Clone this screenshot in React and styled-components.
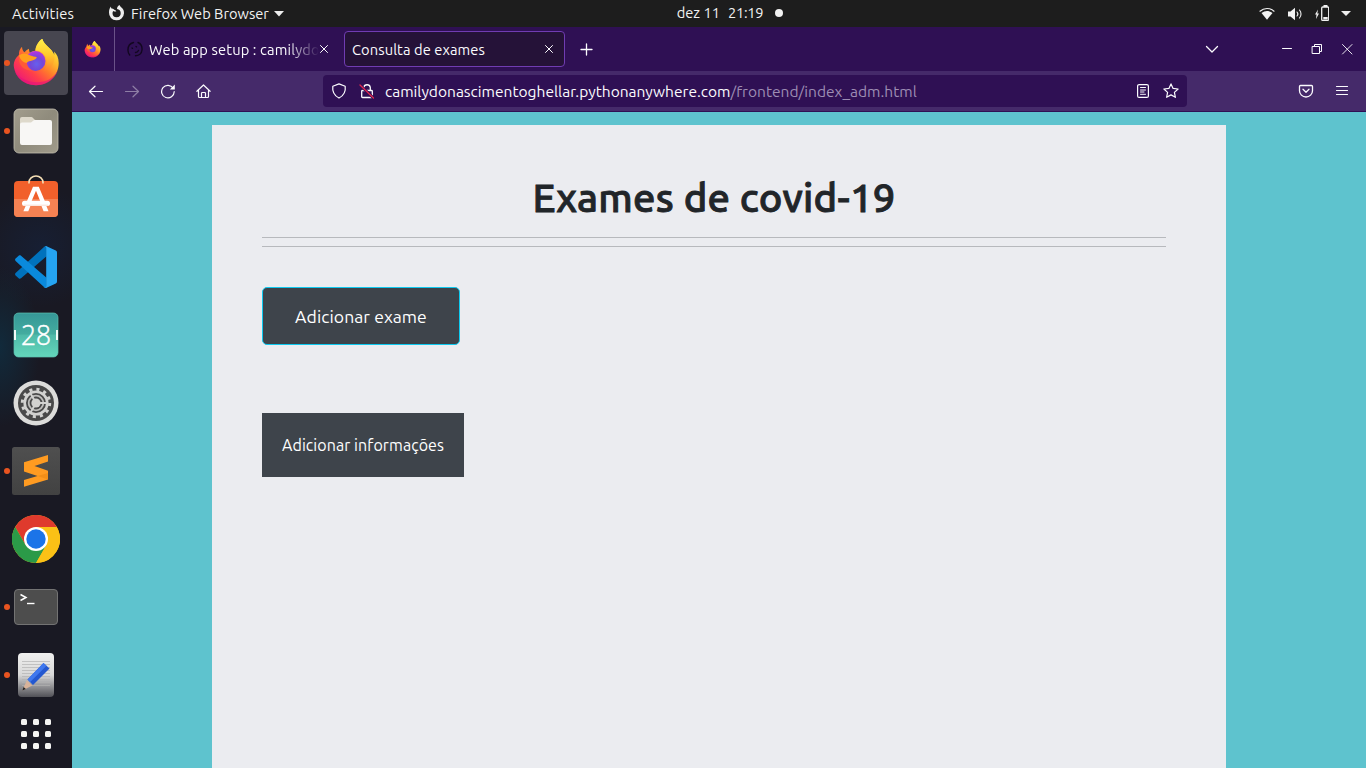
import React from "react";
import styled, { createGlobalStyle } from "styled-components";

const Global = createGlobalStyle`
  * { box-sizing: border-box; }
  body { margin: 0; overflow: hidden; background: #1d1d1d; font-family: Ubuntu, "Noto Sans", sans-serif; }
  button { font-family: inherit; }
  svg { display: block; flex: none; }
`;

const Desktop = styled.div`
  width: 1366px;
  height: 768px;
  display: grid;
  grid-template: 27px 741px / 72px 1294px;
  overflow: hidden;
`;

const Label = styled.span`
  font-size: ${(p) => p.$size || 14.667}px;
  letter-spacing: ${(p) => p.$track || 0}px;
  line-height: 20px;
  white-space: pre;
`;

/* ---------- top panel ---------- */
const Panel = styled.header`
  grid-column: 1 / 3;
  display: grid;
  grid-template-columns: 1fr auto 1fr;
  align-items: center;
  background: #1d1d1d;
  color: #f2f2f2;
`;
const PanelLeft = styled.div`
  display: flex;
  align-items: center;
  padding-left: 12px;
`;
const AppMenu = styled.div`
  display: flex;
  align-items: center;
  gap: 5px;
  margin-left: 34px;
`;
const MenuTitle = styled(Label)`
  margin-left: 1px;
`;
const Clock = styled.div`
  display: flex;
  align-items: center;
  gap: 8px;
  margin-left: 94px;
  padding-bottom: 1px;
`;
const Dot = styled.i`
  width: 8px;
  height: 8px;
  border-radius: 50%;
  margin-left: 4px;
  background: #f2f2f2;
`;
const PanelRight = styled.div`
  display: flex;
  justify-content: flex-end;
  align-items: center;
  gap: 12px;
  padding-right: 15px;
`;

/* ---------- dock ---------- */
const Dock = styled.nav`
  display: flex;
  flex-direction: column;
  align-items: center;
  gap: 4px;
  padding-top: 4px;
  background:
    radial-gradient(ellipse 40px 80px at 0 320px, #112a3b 0, transparent 100%),
    radial-gradient(ellipse 60px 60px at 40px 220px, #171f33 0, transparent 100%),
    #191923;
`;
const Slot = styled.div`
  position: relative;
  width: 64px;
  height: 64px;
  flex: none;
  display: grid;
  place-items: center;
  border-radius: 4px;
  background: ${(p) => (p.$active ? "#474650" : "transparent")};
`;
const Running = styled.i`
  position: absolute;
  left: 0;
  top: 29px;
  width: 6px;
  height: 6px;
  border-radius: 50%;
  background: #e95420;
`;
const Launcher = styled.div`
  display: grid;
  grid-template-columns: repeat(3, 6px);
  gap: 6px;
  margin-top: 8px;
`;
const LauncherDot = styled.i`
  height: 6px;
  border-radius: 1.5px;
  background: #f4f4f2;
`;

/* ---------- browser ---------- */
const Browser = styled.main`
  display: flex;
  flex-direction: column;
  background: #5ec3ce;
`;
const TabStrip = styled.div`
  height: 44px;
  flex: none;
  display: flex;
  align-items: center;
  background: #2f1054;
  color: #fbfbfe;
`;
const PinnedTab = styled.div`
  width: 43px;
  height: 44px;
  display: flex;
  align-items: center;
  padding-left: 12px;
  border-right: 1px solid #6a5288;
`;
const Tab = styled.div`
  width: ${(p) => p.$width}px;
  height: 36px;
  display: flex;
  align-items: center;
  margin-left: ${(p) => p.$gap}px;
  padding: 0 ${(p) => p.$end}px 0 7px;
  border-radius: 4px;
  border: 1px solid ${(p) => (p.$active ? "#703cb2" : "transparent")};
  background: ${(p) => (p.$active ? "#251238" : "transparent")};
`;
const TabTitle = styled.div`
  flex: 1;
  min-width: 0;
  margin-left: ${(p) => p.$indent || 0}px;
  padding-top: 1px;
  display: flex;
  ${(p) => p.$fade && "margin-right: -3px; mask-image: linear-gradient(to right, #000 calc(100% - 32px), transparent);"}
`;
const NewTab = styled.div`
  margin-left: 13px;
`;
const WindowControls = styled.div`
  display: flex;
  align-items: center;
  margin-left: auto;
  gap: 14px;
  padding-right: 11px;
`;
const TabsMenu = styled.div`
  margin-right: 45px;
`;
const Toolbar = styled.div`
  height: 41px;
  flex: none;
  display: flex;
  align-items: center;
  background: #452a6a;
  border-bottom: 1px solid #2f1054;
  color: #fbfbfe;
`;
const NavButtons = styled.div`
  width: 251px;
  display: flex;
  gap: 20px;
  padding-left: 16px;
`;
const AddressBar = styled.div`
  width: 864px;
  height: 32px;
  display: flex;
  align-items: center;
  gap: 12px;
  padding: 0 8px;
  border-radius: 4px;
  background: #2f1054;
`;
const Url = styled.div`
  flex: 1;
  margin-left: -2px;
  padding-top: 1px;
  display: flex;
`;
const UrlPath = styled(Label)`
  color: #9d8db3;
`;
const ToolbarEnd = styled.div`
  margin-left: auto;
  display: flex;
  gap: 20px;
  padding-right: 16px;
`;

/* ---------- page ---------- */
const Sheet = styled.section`
  flex: 1;
  width: 1014px;
  margin: 13px 0 0 140px;
  padding: 49px 60px 0 50px;
  background: #ebecf0;
`;
const Title = styled.h1`
  margin: 0 0 15px;
  text-align: center;
  font-size: 40px;
  font-weight: 500;
  line-height: 48px;
  letter-spacing: 0.25px;
  -webkit-text-stroke: 0.9px #212529;
  color: #212529;
  white-space: nowrap;
`;
const Rule = styled.hr`
  height: 1px;
  margin: 0 0 8px;
  border: 0;
  background: #b7b9bd;
`;
const Action = styled.button`
  display: block;
  width: ${(p) => p.$width}px;
  height: ${(p) => p.$height}px;
  margin-top: ${(p) => p.$top}px;
  padding: ${(p) => (p.$outlined ? "2px 0 0" : 0)};
  color: #fff;
  background: #3e444b;
  border: ${(p) => (p.$outlined ? "1px solid #0dcaf0" : "0")};
  border-radius: ${(p) => (p.$outlined ? 5 : 0)}px;
`;

/* ---------- icons ---------- */
const Glyph = ({ w = 16, h = 16, sw = 1.2, color = "currentColor", children }) => (
  <svg width={w} height={h} viewBox={`0 0 ${w} ${h}`} fill="none" stroke={color} strokeWidth={sw} strokeLinecap="round" strokeLinejoin="round">
    {children}
  </svg>
);

const AppIcon = ({ children }) => (
  <svg width="48" height="48" viewBox="0 0 48 48">{children}</svg>
);

const FirefoxArt = ({ size, id }) => (
  <svg width={size} height={size} viewBox="0 0 48 48">
    <defs>
      <linearGradient id={id + "b"} x1="42" y1="8" x2="12" y2="42" gradientUnits="userSpaceOnUse">
        <stop offset="0" stopColor="#ffe83a" />
        <stop offset=".28" stopColor="#ffb32b" />
        <stop offset=".5" stopColor="#ff7a2b" />
        <stop offset=".75" stopColor="#ff3f4a" />
        <stop offset="1" stopColor="#f01f70" />
      </linearGradient>
      <radialGradient id={id + "g"} cx=".55" cy=".65" r=".65">
        <stop offset="0" stopColor="#6560ee" />
        <stop offset=".5" stopColor="#7447d6" />
        <stop offset="1" stopColor="#b833e1" />
      </radialGradient>
      <linearGradient id={id + "f"} x1="0" y1="0" x2="0" y2="1">
        <stop offset="0" stopColor="#fff04a" />
        <stop offset=".5" stopColor="#ffc92b" />
        <stop offset="1" stopColor="#ff7a2b" stopOpacity=".3" />
      </linearGradient>
    </defs>
    <path fill={`url(#${id}b)`} d="M10 7.800c-2.300 2.200-3.200 5.200-3.100 8.200C3.500 19 1.700 22.600 1.700 26c.6 11.300 10.100 20.200 22.300 20.200 12.600 0 22.700-9.600 22.700-22.200 0-5-1.700-9-4.700-11.500.3 1.500.3 2.500.2 3.500C39.500 8.500 32 6.600 30.300-.2c-4 2.600-6.600 7.200-6.900 12-2.300.2-3.900.8-5.400 2-.8-1-1-2.700-1-4-2 .8-3.300 2-4.400 3.500-1.400-.6-2.500-2.600-2.600-5.500z" />
    <path fill="#e5127c" opacity=".6" d="M3 32.500c3 8.500 11 13.700 21 13.700 10.500 0 19-6 22-15-5 8.500-12 12-21 12-10 0-17.500-4-22-10.700z" />
    <path fill={`url(#${id}f)`} d="M30.300-.2c-4 2.600-6.600 7.200-6.900 12 3.500-.2 8.300 1.600 10.400 6.200 2.300 5 1.200 11-3 14.700 7-.8 12.700-7.700 11.400-16.700C39.500 8.500 32 6.600 30.300-.2z" />
    <circle cx="23.500" cy="22" r="10" fill={`url(#${id}g)`} />
    <path fill="#ff5a36" d="M6.900 16c2.600 0 6 3 7.600 6.500.2 4 2.500 7.300 6 9.200-7.500 0-12.800-4-13.600-11z" />
    <path fill="#ffa01c" d="M6.900 16.500c2.300-1.900 5.500-2.700 8.200-1.500 2.500 1.200 4.900 2.700 9.700 3-.2 1.700-2.500 3-4.700 3.600-2.100.6-4.400.8-5.600 2.400-3.600-.5-6-3-7.600-7.500z" />
  </svg>
);

const FilesIcon = () => (
  <AppIcon>
    <defs><linearGradient id="fi" x1="0" y1="0" x2="1" y2="1"><stop offset="0" stopColor="#a29d8d" /><stop offset=".5" stopColor="#8f8b7c" /><stop offset="1" stopColor="#a09b8b" /></linearGradient></defs>
    <rect x="2" y="2" width="44" height="44" rx="5" fill="url(#fi)" stroke="#c2beae" strokeWidth=".8" />
    <path fill="#ded9cb" d="M8 12a2 2 0 0 1 2-2h9.500c1.500 0 2.500 3 4 3h8v6H8z" />
    <path fill="#f8f7f5" d="M8 17.500a2 2 0 0 1 2-2h9c1 0 2-2.500 3.500-2.500H38a2 2 0 0 1 2 2v21a2 2 0 0 1-2 2H10a2 2 0 0 1-2-2z" />
  </AppIcon>
);

const StoreIcon = () => (
  <AppIcon>
    <rect x="2" y="6" width="44" height="36" rx="4" fill="#f1602b" />
    <path d="M2 24h44v14a4 4 0 0 1-4 4H6a4 4 0 0 1-4-4z" fill="#f58253" />
    <path d="M17 8.500V7.500a7 6.500 0 0 1 14 0v1" fill="none" stroke="#f6dfb5" strokeWidth="1.600" />
    <path fill="#fff" d="M21 11.800h5.800l6 14.200h-4.600L24 15.700 19.600 26H15zM13.600 31h4.800l-2.100 5.200h-4.900zM29.500 31h4.900l2.100 5.200h-4.900z" />
    <rect x="10" y="25.800" width="28" height="5.200" rx="2.500" fill="#fff" />
    <path d="M12 30.200h24" stroke="#f6d6c6" strokeWidth=".8" />
  </AppIcon>
);

const CodeIcon = () => (
  <AppIcon>
    <path fill="#0072bd" d="M34.500 3.200v10L9 35.300c-.7.600-1.500.6-2.100.1l-3.300-3c-.7-.7-.7-1.700 0-2.400L32 4c.8-.8 1.600-1 2.500-.8z" />
    <path fill="#0a8add" d="M34.500 44.800v-10L9 12.700c-.7-.6-1.500-.6-2.100-.1l-3.300 3c-.7.700-.7 1.700 0 2.400L32 44c.8.800 1.600 1 2.500.8z" />
    <path fill="#25a4f2" d="M34 3l9.800 4.600c.8.400 1.200 1 1.200 1.900v29c0 .9-.4 1.500-1.200 1.900L34 45c-1 .3-1.700 0-2.500-.8 1.200 1 2.700.3 2.700-1.200V5c0-1.500-1.500-2.200-2.700-1.200C32.300 3 33 2.700 34 3z" />
  </AppIcon>
);

const CalendarIcon = () => (
  <AppIcon>
    <defs><linearGradient id="ca" x1="0" y1="0" x2="0" y2="1"><stop offset="0" stopColor="#369797" /><stop offset=".48" stopColor="#43ac9f" /><stop offset=".5" stopColor="#4fbaa9" /><stop offset="1" stopColor="#63d6bb" /></linearGradient></defs>
    <rect x="2" y="2" width="44" height="44" rx="4.500" fill="url(#ca)" stroke="#5cc0b0" strokeWidth=".7" />
    <path d="M2 19h2v10H2zM44 19h2v10h-2z" fill="#f4faf8" />
    <text x="24" y="33.500" textAnchor="middle" fontSize="27" fontWeight="300" textLength="30" lengthAdjust="spacingAndGlyphs" fill="#fff" stroke="#fff" strokeWidth=".5" fontFamily="Open Sans, Noto Sans, sans-serif">28</text>
  </AppIcon>
);

const SettingsIcon = () => (
  <AppIcon>
    <circle cx="24" cy="24" r="22.500" fill="#dcdcda" />
    <circle cx="24" cy="24" r="18" fill="#494949" />
    <circle cx="24" cy="24" r="13.700" fill="none" stroke="#d2d2d0" strokeWidth="3" strokeDasharray="3.100 4.073" />
    <circle cx="24" cy="24" r="11.300" fill="none" stroke="#d2d2d0" strokeWidth="2.600" />
    <circle cx="24" cy="24" r="7.300" fill="none" stroke="#bdbdbb" strokeWidth="1.800" />
    <circle cx="24" cy="24" r="4.600" fill="#d2d2d0" />
    <path d="M24 24h11M24 24l-5.500-9.500M24 24l-5.500 9.500" stroke="#d2d2d0" strokeWidth="2" />
  </AppIcon>
);

const SublimeIcon = () => (
  <AppIcon>
    <defs><linearGradient id="su" x1="0" y1="0" x2="0" y2="1"><stop offset="0" stopColor="#4f4f4f" /><stop offset="1" stopColor="#424242" /></linearGradient></defs>
    <rect width="48" height="48" rx="2.500" fill="url(#su)" />
    <path fill="#ff9b21" d="M12 15.300L36 8v6.500L22.500 19 36 23.800v8.700l-24 7.300V33l13.500-4L12 24.500z" />
    <path fill="#e5830f" d="M22 27.700l14 4.800V26l-10.500 3z" opacity=".5" />
  </AppIcon>
);

const ChromeIcon = () => (
  <AppIcon>
    <circle cx="24" cy="24" r="24" fill="#fbc116" />
    <path fill="#df3a2d" d="M3.200 12A24 24 0 0 1 44.800 12H24L13.600 30z" />
    <path fill="#2b9a48" d="M3.200 12A24 24 0 0 0 24 48L34.400 30H13.600z" />
    <path fill="#fbc116" d="M24 12h20.800A24 24 0 0 1 24 48l10.400-18z" />
    <circle cx="24" cy="24" r="12" fill="#fff" />
    <circle cx="24" cy="24" r="9.700" fill="#1b74e8" />
  </AppIcon>
);

const TerminalIcon = () => (
  <AppIcon>
    <rect x="2.500" y="6.500" width="43" height="35" rx="3.500" fill="#4d4d4d" stroke="#737373" />
    <path d="M8.500 11.500l5.500 3-5.500 3" fill="none" stroke="#fff" strokeWidth="1.500" />
    <path d="M15 20.500h7.500" stroke="#fff" strokeWidth="1.400" />
  </AppIcon>
);

const EditorIcon = () => (
  <AppIcon>
    <defs><linearGradient id="ed" x1="0" y1="0" x2="0" y2="1"><stop offset="0" stopColor="#f0f0ef" /><stop offset=".5" stopColor="#d8d8d8" /><stop offset="1" stopColor="#515157" /></linearGradient></defs>
    <rect x="6" y="2" width="36" height="44" rx="4" fill="url(#ed)" />
    <path d="M10 10.500h28M10 13.500h28M10 16.500h28M10 19.500h28M10 22.500h28M10 25.500h28M10 28.500h28M10 31.500h28M10 34.500h28" stroke="#b2b2b2" strokeWidth=".7" />
    <path d="M10.300 39.500l4.500-10 5.500 5z" fill="#d9b39a" />
    <path d="M10.300 39.500l1.300-3.400 2.200 2z" fill="#222" />
    <path d="M15.500 28.500l16-16.500 6 5.500-16.500 16.500z" fill="#2458d0" />
    <path d="M15.500 28.500l16-16.500 3 2.700-16.300 16.300z" fill="#3f78ee" />
  </AppIcon>
);

const apps = [
  { name: "firefox", icon: <FirefoxArt size={48} id="ffd" />, running: true, active: true },
  { name: "files", icon: <FilesIcon />, running: true },
  { name: "store", icon: <StoreIcon /> },
  { name: "code", icon: <CodeIcon /> },
  { name: "calendar", icon: <CalendarIcon /> },
  { name: "settings", icon: <SettingsIcon /> },
  { name: "sublime", icon: <SublimeIcon />, running: true },
  { name: "chrome", icon: <ChromeIcon /> },
  { name: "terminal", icon: <TerminalIcon />, running: true },
  { name: "editor", icon: <EditorIcon />, running: true },
];

const TabClose = () => <Glyph w={16} h={10} sw={1}><path d="M4.500 1.500l7 7M11.500 1.500l-7 7" /></Glyph>;

export default function App() {
  return (
    <Desktop>
      <Global />
      <Panel>
        <PanelLeft>
          <Label $track={0.2}>Activities</Label>
          <AppMenu>
            <Glyph w={17} h={18} sw={0}>
              <path fill="#eee" fillRule="evenodd" d="M3 1.500C1.500 3 1 5 1 7.500a7.500 7.500 0 0 0 15 .7c0-2-.5-3.500-1.500-4.700C13.700 2.300 12 1.700 11.500 0 9.800 1 9 2.300 9 4c2.300.3 3.700 2 3.700 4a4.100 4.100 0 0 1-8.200.3c0-1 .3-1.700.8-2.300C6 6.500 7 6.700 8.300 6.500 8 5.500 7 5 6 4.500 5.500 3.500 4 3.500 3.500 3.500 3 3 3 2 3 1.500z" />
            </Glyph>
            <MenuTitle>Firefox Web Browser</MenuTitle>
            <Glyph w={10} h={6} sw={0}><path fill="#eee" d="M0 0h10L5 5.500z" /></Glyph>
          </AppMenu>
        </PanelLeft>
        <Clock>
          <Label>dez 11</Label>
          <Label $track={-0.25}>21:19</Label>
          <Dot />
        </Clock>
        <PanelRight>
          <Glyph w={16} h={14} sw={1.200} color="#f2f2f2">
            <path d="M1 4.200C5 .6 11 .6 15 4.200" />
            <path fill="#f2f2f2" stroke="none" d="M2.500 6C6 3.200 10 3.200 13.500 6L8 12.800z" />
          </Glyph>
          <Glyph w={16} h={14} sw={1.100} color="#f2f2f2">
            <path fill="#f2f2f2" stroke="none" d="M1 4.500h2.500L8 .8v12.400L3.500 9.500H1z" />
            <path d="M10 5c.9 1 .9 3 0 4M12.500 3c2 2.200 2 5.800 0 8" />
          </Glyph>
          <Glyph w={14} h={18} sw={1.300} color="#f2f2f2">
            <path fill="#f2f2f2" stroke="none" d="M3 4.500L0 9.500H1.500L1 14 4 8.500H2.300zM8.300 12h4.400v2.500H8.300zM8.500 0h4v2H8.500z" />
            <rect x="6.700" y="2" width="7" height="13.400" rx="1" />
          </Glyph>
          <Glyph w={10} h={6} sw={0}><path fill="#eee" d="M0 0h10L5 5z" /></Glyph>
        </PanelRight>
      </Panel>

      <Dock>
        {apps.map((a) => (
          <Slot key={a.name} $active={a.active}>
            {a.icon}
            {a.running && <Running />}
          </Slot>
        ))}
        <Launcher>
          {Array.from({ length: 9 }, (_, i) => <LauncherDot key={i} />)}
        </Launcher>
      </Dock>

      <Browser>
        <TabStrip>
          <PinnedTab><FirefoxArt size={17} id="fft" /></PinnedTab>
          <Tab $width={221} $gap={4} $end={7}>
            <Glyph w={16} h={16} sw={1.400} color="#12071f">
              <path d="M6.500 1.500C2.500 2.500.8 6 1 9.500c.1 2 .8 3.500 1.700 4.500M11 1.500c3 1.200 4.300 4 4 7.500-.4 3.500-3 5.500-6.500 5.800" />
              <path d="M5 7l.5.300M9 5.500l.5.300M8.500 11.500c1.500 0 2.500-1 3-2" />
            </Glyph>
            <TabTitle $indent={6} $fade><Label $track={0.14}>Web app setup : camilydo</Label></TabTitle>
            <TabClose />
          </Tab>
          <Tab $active $width={221} $gap={4} $end={7}>
            <TabTitle><Label $track={0.1}>Consulta de exames</Label></TabTitle>
            <TabClose />
          </Tab>
          <NewTab><Glyph sw={1.300}><path d="M8.500 3v11M3 8.500h11" /></Glyph></NewTab>
          <WindowControls>
            <TabsMenu><Glyph sw={1.300}><path d="M2.500 5.500L8 11l5.500-5.500" /></Glyph></TabsMenu>
            <Glyph sw={1}><path d="M3.500 7.500h9" /></Glyph>
            <Glyph sw={1}><path d="M3.500 5.500h7v7h-7zM5.500 5.500v-2h7v7h-2" /></Glyph>
            <Glyph sw={0.9}><path d="M3.500 3.500l9.500 9.500M13 3.500l-9.500 9.500" /></Glyph>
          </WindowControls>
        </TabStrip>
        <Toolbar>
          <NavButtons>
            <Glyph><path d="M14.500 8.500h-13M7 3.200L1.500 8.500 7 13.800" /></Glyph>
            <Glyph color="#8f7fa6"><path d="M1.500 8.500h13M9 3.200L14.500 8.500 9 13.800" /></Glyph>
            <Glyph><path d="M13.200 5.200A6.300 6.300 0 1 0 14.200 8.700" /><path fill="currentColor" stroke="none" d="M14.800 1.500v5H9.800z" /></Glyph>
            <Glyph><path d="M.9 8.300L7.500 2l6.600 6.300M2.500 7.300v6.200c0 .6.400 1 1 1h8c.6 0 1-.4 1-1V7.300M5.500 14.300v-4c0-.5.300-.8.800-.8h2.400c.5 0 .8.300.8.800v4" /></Glyph>
          </NavButtons>
          <AddressBar>
            <Glyph><path d="M8 .9l6.200 2.400c.6 4.500-1.200 9-6.200 11.800C3 12.300 1.200 7.800 1.800 3.300z" /></Glyph>
            <Glyph sw={1.300}>
              <path d="M3.500 7.500h9c.5 0 .8.300.8.800v5.400c0 .5-.3.800-.8.800h-9c-.5 0-.8-.3-.8-.8V8.300c0-.5.300-.8.800-.8zM4.800 7V4.500a3.300 3.300 0 0 1 6.500 0V7" />
              <path d="M1 2l13.500 13" stroke="#2f1054" strokeWidth="3" />
              <path d="M1 2l13.500 13" stroke="#e22850" strokeWidth="1.300" />
            </Glyph>
            <Url>
              <Label $size={15.54}>camilydonascimentoghellar.pythonanywhere.com</Label>
              <UrlPath $size={15.54}>/frontend/index_adm.html</UrlPath>
            </Url>
            <Glyph><rect x="2.600" y="1.600" width="10.800" height="12.800" rx="1.500" /><path d="M5.500 4.500h5M5.500 7h5M5.500 9h3.500M5.500 11.300h5" strokeWidth="1" /></Glyph>
            <Glyph><path d="M8 .9l2.100 4.500 5 .6-3.700 3.400 1 4.900L8 11.900l-4.400 2.400 1-4.900L.9 6l5-.6z" /></Glyph>
          </AddressBar>
          <ToolbarEnd>
            <Glyph sw={1.300}><path d="M2.500 2.500h11c.6 0 1 .4 1 1v4.200a6.500 6.300 0 0 1-13 0V3.500c0-.6.400-1 1-1zM5 6.300l3 2.900 3-2.900" /></Glyph>
            <Glyph><path d="M2.500 3.500h11M2.500 7.500h11M2.500 11.500h11" /></Glyph>
          </ToolbarEnd>
        </Toolbar>
        <Sheet>
          <Title>Exames de covid-19</Title>
          <Rule />
          <Rule />
          <Action $outlined $width={198} $height={58} $top={40}><Label $size={17.6} $track={0.05}>Adicionar exame</Label></Action>
          <Action $width={202} $height={64} $top={68}><Label $size={16} $track={0.07}>Adicionar informações</Label></Action>
        </Sheet>
      </Browser>
    </Desktop>
  );
}
